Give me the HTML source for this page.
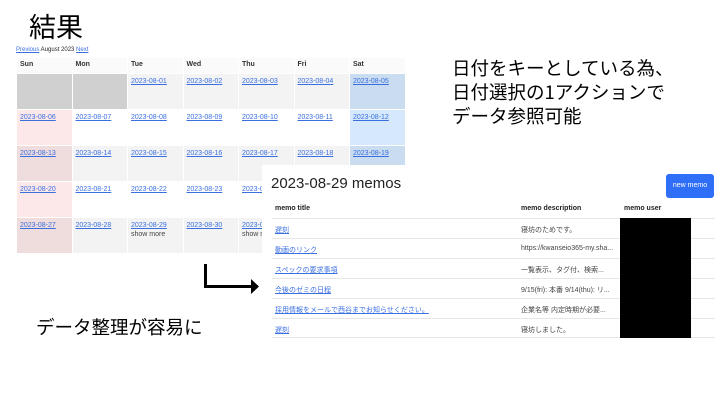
<!DOCTYPE html><html><head><meta charset="utf-8"><style>
*{margin:0;padding:0;box-sizing:border-box}
body{width:720px;height:405px;background:#fff;position:relative;overflow:hidden;font-family:"Liberation Sans","Noto Sans CJK JP",sans-serif}
.a{position:absolute}
.jp{font-family:"Noto Sans CJK JP",sans-serif;color:#000}
table.cal{position:absolute;left:16px;top:57px;border-collapse:collapse;font-size:7px}
.cal td,.cal th{width:55.5px;border:1px solid #fff;vertical-align:top;text-align:left;padding:4px 3px;}
.cal th{height:16px;background:#fafafa;font-weight:bold;color:#333;padding:3px 3px}
.cal td{height:36px;background:#f3f3f3}
.cal a{color:#3a6fe0;text-decoration:underline}
.memo{position:absolute;left:262px;top:165px;width:458px;height:182px;background:#fff}
.memo .r{position:absolute;left:10px;width:443px;border-top:1px solid #e6e6e6;font-size:7px;color:#444;height:20px}
.memo .r span{position:absolute;top:6px}
.memo a{color:#3a6fe0;text-decoration:underline}
</style></head><body>
<div class="a jp" style="left:29px;top:6px;font-size:27px">結果</div>
<div class="a" style="left:16px;top:47px;font-size:6px;color:#222"><span style="color:#3a6fe0;text-decoration:underline">Previous</span> August 2023 <span style="color:#3a6fe0;text-decoration:underline">Next</span></div>
<table class="cal">
<tr><th>Sun</th><th>Mon</th><th>Tue</th><th>Wed</th><th>Thu</th><th>Fri</th><th>Sat</th></tr>
<tr><td style="background:#d0d0d0"></td><td style="background:#d0d0d0"></td><td><a>2023-08-01</a></td><td><a>2023-08-02</a></td><td><a>2023-08-03</a></td><td><a>2023-08-04</a></td><td style="background:#c9dcf0"><a>2023-08-05</a></td></tr>
<tr><td style="background:#fce8e8"><a>2023-08-06</a></td><td style="background:#fff"><a>2023-08-07</a></td><td style="background:#fff"><a>2023-08-08</a></td><td style="background:#fff"><a>2023-08-09</a></td><td style="background:#fff"><a>2023-08-10</a></td><td style="background:#fff"><a>2023-08-11</a></td><td style="background:#d6e9fc"><a>2023-08-12</a></td></tr>
<tr><td style="background:#efdcdc"><a>2023-08-13</a></td><td><a>2023-08-14</a></td><td><a>2023-08-15</a></td><td><a>2023-08-16</a></td><td><a>2023-08-17</a></td><td><a>2023-08-18</a></td><td style="background:#c9dcf0"><a>2023-08-19</a></td></tr>
<tr><td style="background:#fce8e8"><a>2023-08-20</a></td><td style="background:#fff"><a>2023-08-21</a></td><td style="background:#fff"><a>2023-08-22</a></td><td style="background:#fff"><a>2023-08-23</a></td><td style="background:#fff"><a>2023-08-24</a></td><td style="background:#fff"></td><td style="background:#d6e9fc"></td></tr>
<tr><td style="background:#efdcdc"><a>2023-08-27</a></td><td><a>2023-08-28</a></td><td><a>2023-08-29</a><br><span style="color:#444;line-height:12px">show more</span></td><td><a>2023-08-30</a></td><td><a>2023-08-31</a><br><span style="color:#444;line-height:12px">show more</span></td><td></td><td></td></tr>
</table>
<div class="a jp" style="left:452px;top:56px;font-size:18.5px;line-height:24px;white-space:nowrap">日付をキーとしている為、<br>日付選択の1アクションで<br>データ参照可能</div>
<div class="memo">
<div class="a" style="left:9px;top:10px;font-size:15px;color:#222">2023-08-29 memos</div>
<div class="a" style="left:404px;top:9px;width:48px;height:24px;background:#2f6ef7;border-radius:3px;color:#fff;font-size:7px;text-align:center;line-height:24px">new memo</div>
<div class="r" style="top:34px;border:none;font-weight:bold;color:#222"><span style="left:3px">memo title</span><span style="left:249px">memo description</span><span style="left:352px">memo user</span></div>
<div class="r" style="top:53px"><span style="left:3px"><a>遅刻</a></span><span style="left:249px">寝坊のためです。</span></div>
<div class="r" style="top:73px"><span style="left:3px"><a>動画のリンク</a></span><span style="left:249px">https://kwanseio365-my.sha...</span></div>
<div class="r" style="top:93px"><span style="left:3px"><a>スペックの要求事項</a></span><span style="left:249px">一覧表示、タグ付、検索...</span></div>
<div class="r" style="top:113px"><span style="left:3px"><a>今後のゼミの日程</a></span><span style="left:249px">9/15(fri): 本番 9/14(thu): リ...</span></div>
<div class="r" style="top:133px"><span style="left:3px"><a>採用情報をメールで西谷までお知らせください。</a></span><span style="left:249px">企業名等 内定時期が必要...</span></div>
<div class="r" style="top:153px;border-bottom:1px solid #e6e6e6"><span style="left:3px"><a>遅刻</a></span><span style="left:249px">寝坊しました。</span></div>
<div class="a" style="left:358px;top:53px;width:71px;height:120px;background:#000"></div>
</div>
<svg class="a" style="left:0;top:0" width="720" height="405"><path d="M205.5 264V286.5H253" stroke="#000" stroke-width="3" fill="none"/><path d="M251 279L259 286.5L251 294Z" fill="#000"/></svg>
<div class="a jp" style="left:36px;top:314px;font-size:18.5px">データ整理が容易に</div>
</body></html>
